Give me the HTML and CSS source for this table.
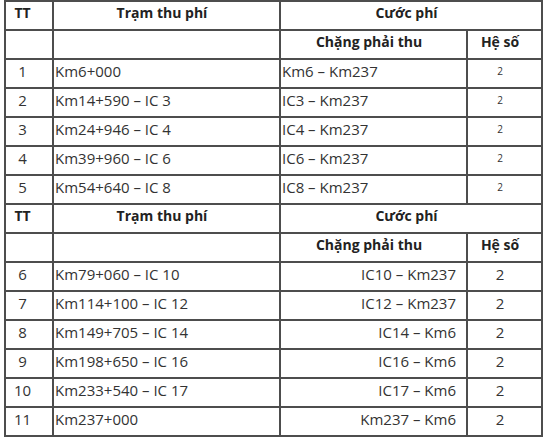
FILE: index.html
```html
<!DOCTYPE html>
<html lang="vi">
<head>
<meta charset="utf-8">
<title>Bảng cước phí</title>
<link rel="stylesheet" href="styles.css">
</head>
<body>
<table class="fee">
  <colgroup>
    <col class="c-tt">
    <col class="c-tram">
    <col class="c-chang">
    <col class="c-heso">
  </colgroup>
  <tbody>
    <tr class="head">
      <th class="tt">TT</th>
      <th>Trạm thu phí</th>
      <th colspan="2">Cước phí</th>
    </tr>
    <tr class="head">
      <th class="tt"></th>
      <th></th>
      <th>Chặng phải thu</th>
      <th>Hệ số</th>
    </tr>
    <tr><td class="tt">1</td><td>Km6+000</td><td>Km6 – Km237</td><td class="hs small">2</td></tr>
    <tr><td class="tt">2</td><td>Km14+590 – IC 3</td><td>IC3 – Km237</td><td class="hs small">2</td></tr>
    <tr><td class="tt">3</td><td>Km24+946 – IC 4</td><td>IC4 – Km237</td><td class="hs small">2</td></tr>
    <tr><td class="tt">4</td><td>Km39+960 – IC 6</td><td>IC6 – Km237</td><td class="hs small">2</td></tr>
    <tr><td class="tt">5</td><td>Km54+640 – IC 8</td><td>IC8 – Km237</td><td class="hs small">2</td></tr>
    <tr class="head">
      <th class="tt">TT</th>
      <th>Trạm thu phí</th>
      <th colspan="2">Cước phí</th>
    </tr>
    <tr class="head">
      <th class="tt"></th>
      <th></th>
      <th>Chặng phải thu</th>
      <th>Hệ số</th>
    </tr>
    <tr><td class="tt">6</td><td>Km79+060 – IC 10</td><td class="right">IC10 – Km237</td><td class="hs">2</td></tr>
    <tr><td class="tt">7</td><td>Km114+100 – IC 12</td><td class="right">IC12 – Km237</td><td class="hs">2</td></tr>
    <tr><td class="tt">8</td><td>Km149+705 – IC 14</td><td class="right">IC14 – Km6</td><td class="hs">2</td></tr>
    <tr><td class="tt">9</td><td>Km198+650 – IC 16</td><td class="right">IC16 – Km6</td><td class="hs">2</td></tr>
    <tr><td class="tt">10</td><td>Km233+540 – IC 17</td><td class="right">IC17 – Km6</td><td class="hs">2</td></tr>
    <tr><td class="tt">11</td><td>Km237+000</td><td class="right">Km237 – Km6</td><td class="hs">2</td></tr>
  </tbody>
</table>
</body>
</html>
```

FILE: styles.css
```css
html, body {
  margin: 0;
  padding: 0;
  background: #ffffff;
}

body {
  font-family: "Open Sans", "Noto Sans", sans-serif;
  font-size: 15px;
  color: #333333;
}

.fee {
  margin: 0 0 0 4px;
  width: 537px;
  border-collapse: collapse;
  table-layout: fixed;
}

.c-tt { width: 48px; }
.c-tram { width: 227px; }
.c-chang { width: 187px; }
.c-heso { width: 75px; }

.fee th,
.fee td {
  border: 2px solid #4d4d4d;
  height: 29px;
  padding: 0 10px 5px 1px;
  line-height: 20px;
  vertical-align: middle;
  box-sizing: border-box;
}

.fee th {
  font-size: 14px;
  font-weight: 700;
  text-align: center;
  color: #222222;
}

.fee td {
  text-align: left;
}

.fee .tt {
  text-align: center;
  padding-right: 14px;
}

.fee td.hs {
  text-align: center;
}

.fee td.small {
  font-size: 10px;
}

.fee td.right {
  text-align: right;
}
```
